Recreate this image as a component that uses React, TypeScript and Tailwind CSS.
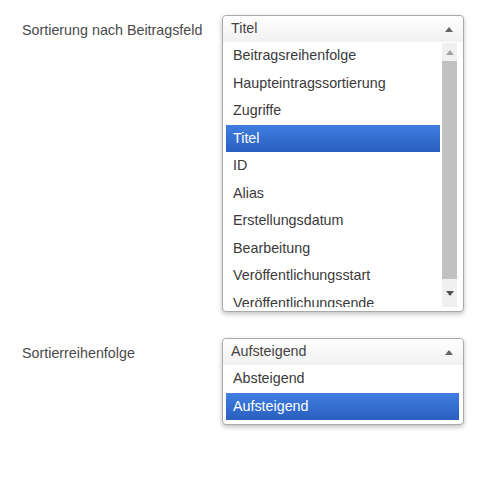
const fields = [
  "Beitragsreihenfolge",
  "Haupteintragssortierung",
  "Zugriffe",
  "Titel",
  "ID",
  "Alias",
  "Erstellungsdatum",
  "Bearbeitung",
  "Veröffentlichungsstart",
  "Veröffentlichungsende",
];

const orders = ["Absteigend", "Aufsteigend"];

const UpArrow = ({ className }: { className?: string }) => (
  <span
    className={`block w-0 h-0 border-l-[4px] border-r-[4px] border-b-[5px] border-l-transparent border-r-transparent ${className}`}
  />
);

const DownArrow = ({ className }: { className?: string }) => (
  <span
    className={`block w-0 h-0 border-l-[4px] border-r-[4px] border-t-[5px] border-l-transparent border-r-transparent ${className}`}
  />
);

const Option = ({ label, active }: { label: string; active: boolean }) => (
  <li
    className={
      active
        ? "h-[27.5px] flex items-center pl-[7px] text-white bg-gradient-to-b from-[#3f7ee0] to-[#2a5fbf]"
        : "h-[27.5px] flex items-center pl-[7px] text-[#3a3a3a]"
    }
  >
    {label}
  </li>
);

const Header = ({ value }: { value: string }) => (
  <div className="h-[26px] flex items-center justify-between pl-[8px] pr-[10px] bg-gradient-to-b from-white to-[#f1f1f1] rounded-t-[4px] text-[#444]">
    <span>{value}</span>
    <UpArrow className="border-b-[#666]" />
  </div>
);

export default function App() {
  return (
    <div
      className="w-[500px] h-[480px] bg-white pl-[22px] pt-[15px] text-[14.3px]"
      style={{ fontFamily: "'Liberation Sans', Arial, sans-serif" }}
    >
      {/* Sortierung nach Beitragsfeld */}
      <div className="flex">
        <div className="w-[200px] pt-[5px] text-[#4a4a4a]">Sortierung nach Beitragsfeld</div>
        <div className="w-[242px] h-[297px] border border-[#aaa] rounded-[4px] bg-white shadow-[0_2px_5px_rgba(0,0,0,0.25)] flex flex-col">
          <Header value="Titel" />
          <div className="flex flex-1 ml-[3px] mr-[6px] mb-[4px] overflow-hidden">
            <ul className="flex-1 overflow-hidden">
              {fields.map((f) => (
                <Option key={f} label={f} active={f === "Titel"} />
              ))}
            </ul>
            <div className="w-[15px] ml-[2px] mt-px bg-[#f0f0f0] flex flex-col items-center">
              <div className="h-[18px] flex items-center justify-center">
                <UpArrow className="border-b-[#a3a3a3]" />
              </div>
              <div className="w-full h-[218px] bg-[#c1c1c1]" />
              <div className="flex-1 flex items-center justify-center">
                <DownArrow className="border-t-[#505050]" />
              </div>
            </div>
          </div>
        </div>
      </div>

      {/* Sortierreihenfolge */}
      <div className="flex mt-[26px]">
        <div className="w-[200px] pt-[5px] text-[#4a4a4a]">Sortierreihenfolge</div>
        <div className="w-[242px] h-[87px] border border-[#aaa] rounded-[4px] bg-white shadow-[0_2px_5px_rgba(0,0,0,0.25)] flex flex-col">
          <Header value="Aufsteigend" />
          <ul className="ml-[3px] mr-[4px]">
            {orders.map((o) => (
              <Option key={o} label={o} active={o === "Aufsteigend"} />
            ))}
          </ul>
        </div>
      </div>
    </div>
  );
}
